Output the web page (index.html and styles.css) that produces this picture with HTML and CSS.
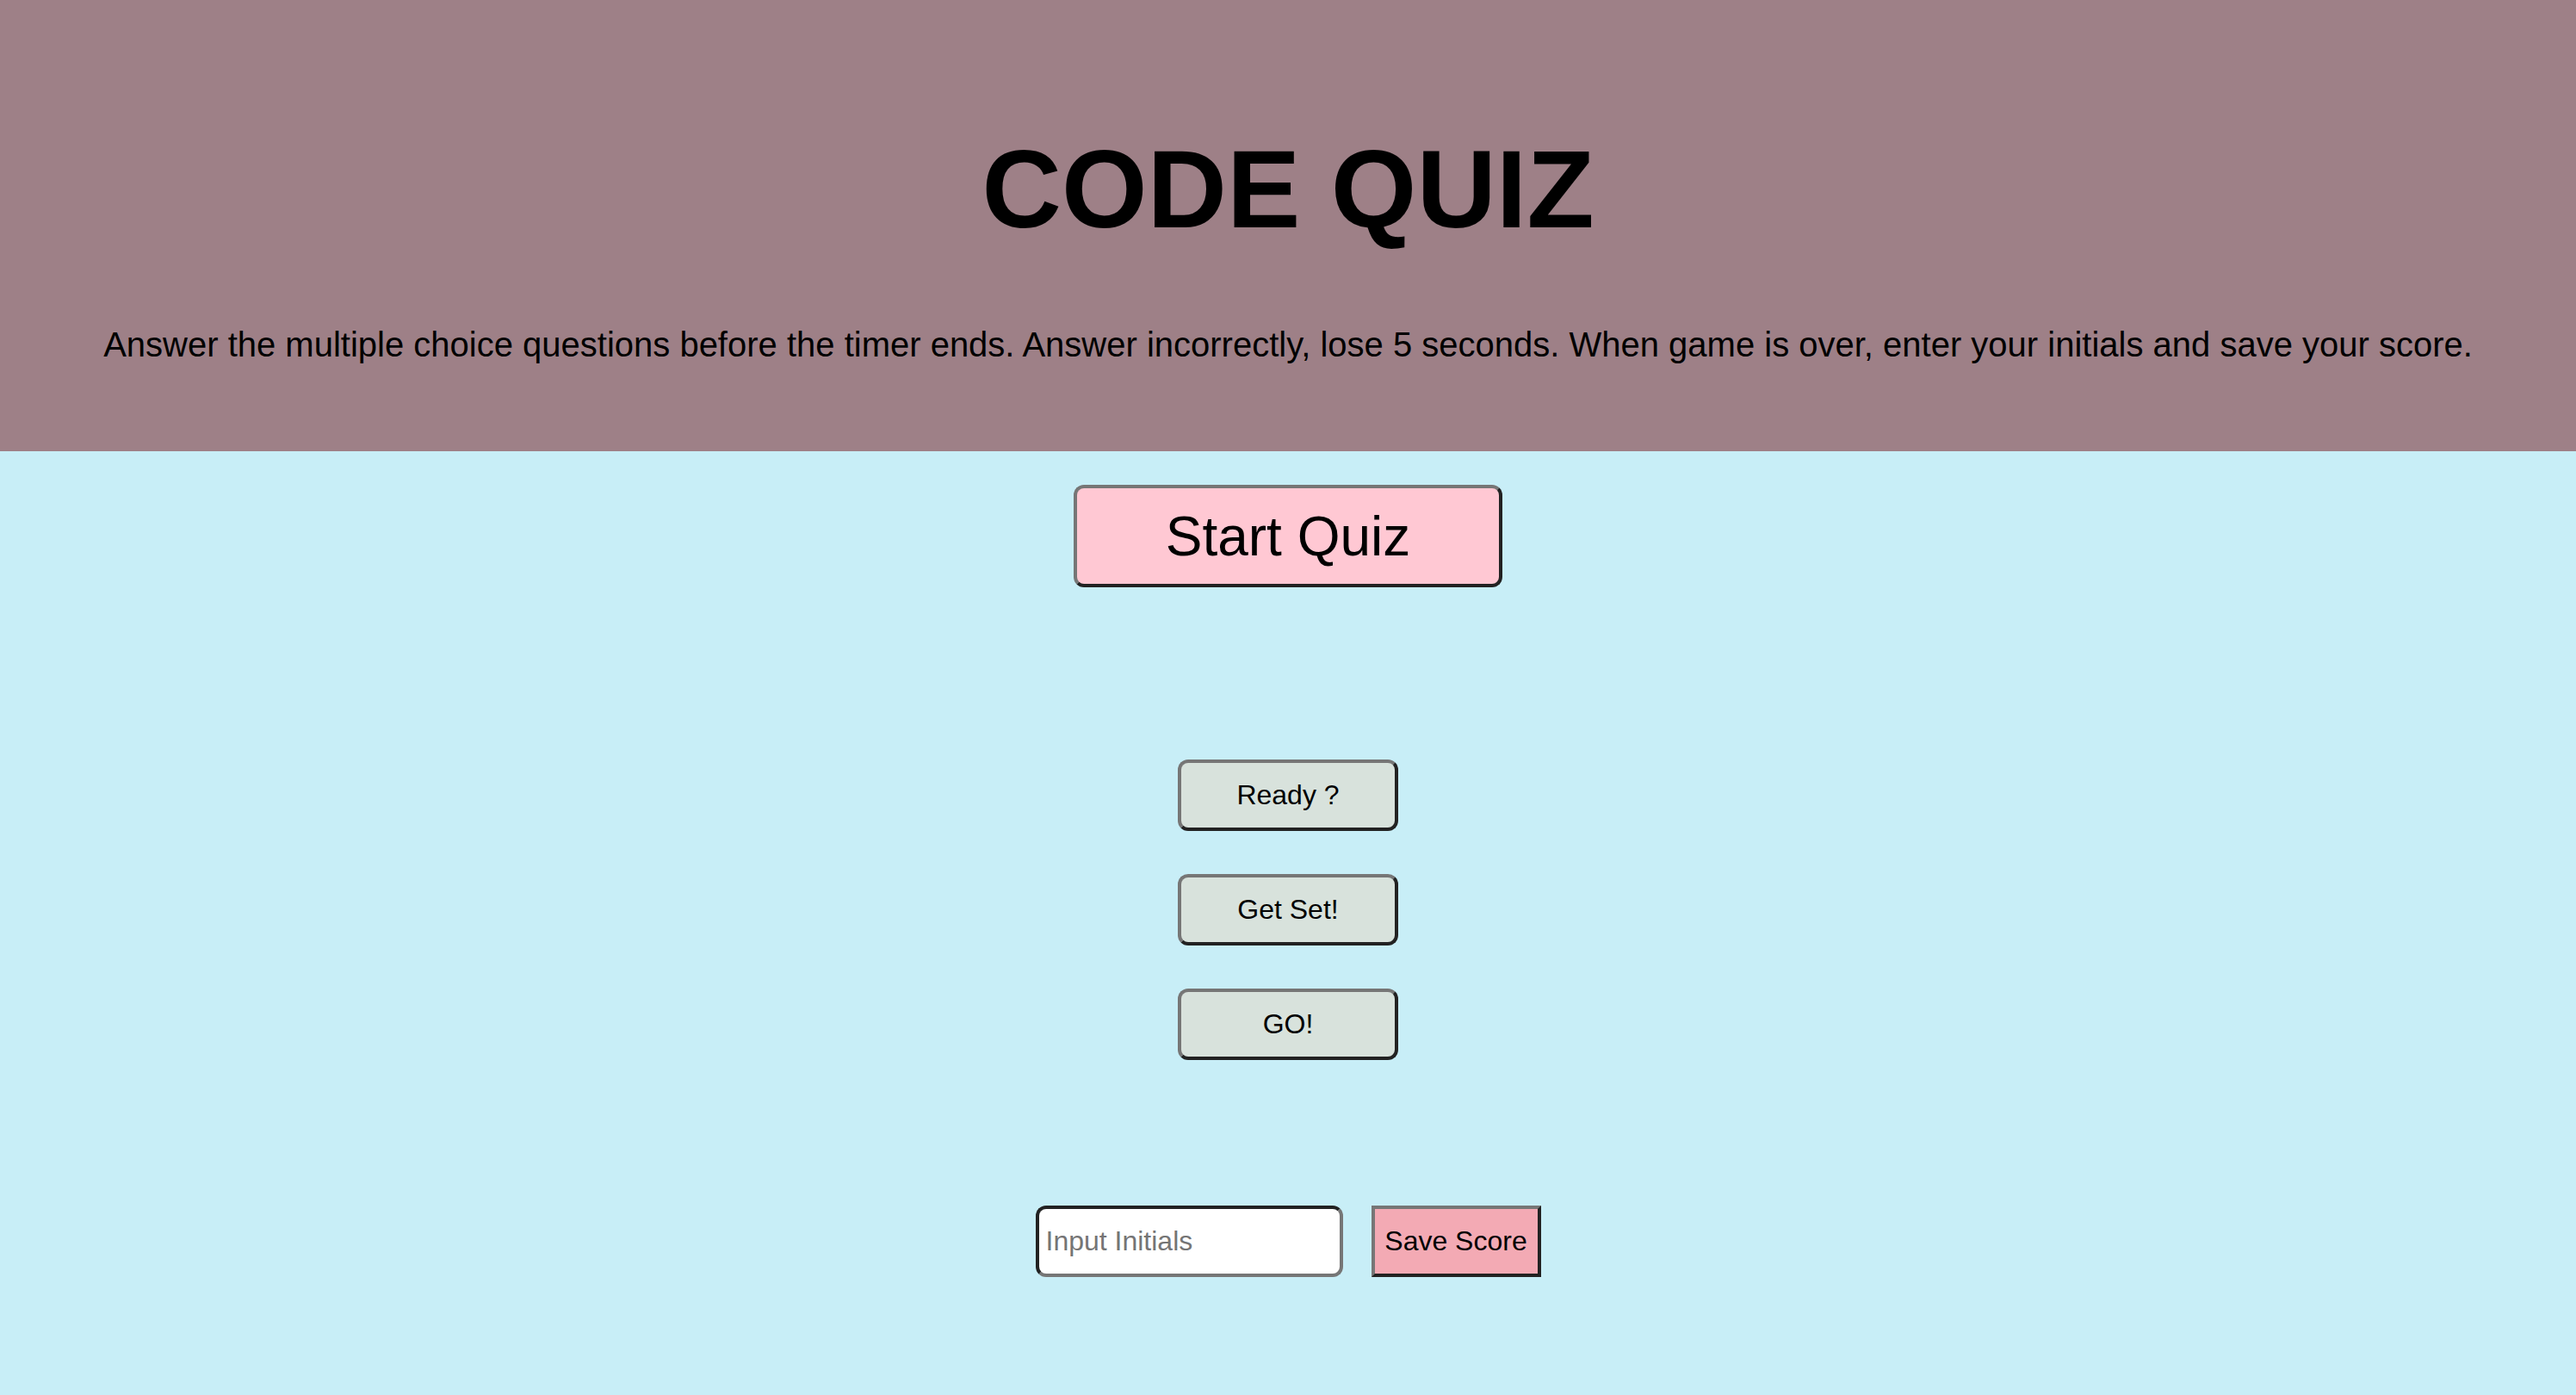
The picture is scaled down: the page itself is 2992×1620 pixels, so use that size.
FILE: index.html
```html
<!DOCTYPE html>
<html lang="en">
<head>
<meta charset="utf-8">
<title>Code Quiz</title>
<link rel="stylesheet" href="styles.css">
</head>
<body>
<header class="hero">
  <h1 class="title">CODE QUIZ</h1>
  <p class="intro">Answer the multiple choice questions before the timer ends. Answer incorrectly, lose 5 seconds. When game is over, enter your initials and save your score.</p>
</header>
<main class="stage">
  <button class="start-btn" type="button">Start Quiz</button>
  <div class="steps">
    <button class="step-btn" type="button">Ready ?</button>
    <button class="step-btn" type="button">Get Set!</button>
    <button class="step-btn" type="button">GO!</button>
  </div>
  <div class="score-row">
    <input class="initials" type="text" placeholder="Input Initials">
    <button class="save-btn" type="button">Save Score</button>
  </div>
</main>
</body>
</html>
```

FILE: styles.css
```css
html, body {
  margin: 0;
  padding: 0;
  background: #c8eef7;
  font-family: "Liberation Sans", Arial, sans-serif;
  color: #000;
}

body {
  min-height: 100vh;
}

.hero {
  background: #9e8087;
  padding: 156px 0 104px;
  text-align: center;
}

.title {
  margin: 0;
  font-size: 128px;
  line-height: 1;
  font-weight: 700;
}

.intro {
  margin: 96px 0 0;
  font-size: 40px;
  line-height: 1;
}

.stage {
  display: flex;
  flex-direction: column;
  align-items: center;
}

.start-btn,
.step-btn,
.save-btn,
.initials {
  box-sizing: border-box;
  font-family: "Liberation Sans", Arial, sans-serif;
  color: #000;
  border-width: 4px;
  border-style: solid;
  border-color: #767676 #222 #222 #767676;
  margin: 0;
  padding: 0;
}

.start-btn {
  margin-top: 39px;
  width: 498px;
  height: 119px;
  font-size: 64px;
  background: #ffc8d3;
  border-radius: 12px;
}

.steps {
  margin-top: 200px;
  display: flex;
  flex-direction: column;
  gap: 50px;
}

.step-btn {
  width: 256px;
  height: 83px;
  font-size: 32px;
  background: #d8e2dc;
  border-radius: 12px;
}

.score-row {
  margin-top: 169px;
  display: flex;
  gap: 33px;
}

.initials {
  width: 357px;
  height: 83px;
  font-size: 32px;
  padding: 0 8px;
  background: #fff;
  border-color: #222 #767676 #767676 #222;
  border-radius: 12px;
  outline: none;
}

.initials::placeholder {
  color: #757575;
}

.save-btn {
  width: 197px;
  height: 83px;
  font-size: 32px;
  background: #f3aab4;
  border-radius: 0;
}
```
